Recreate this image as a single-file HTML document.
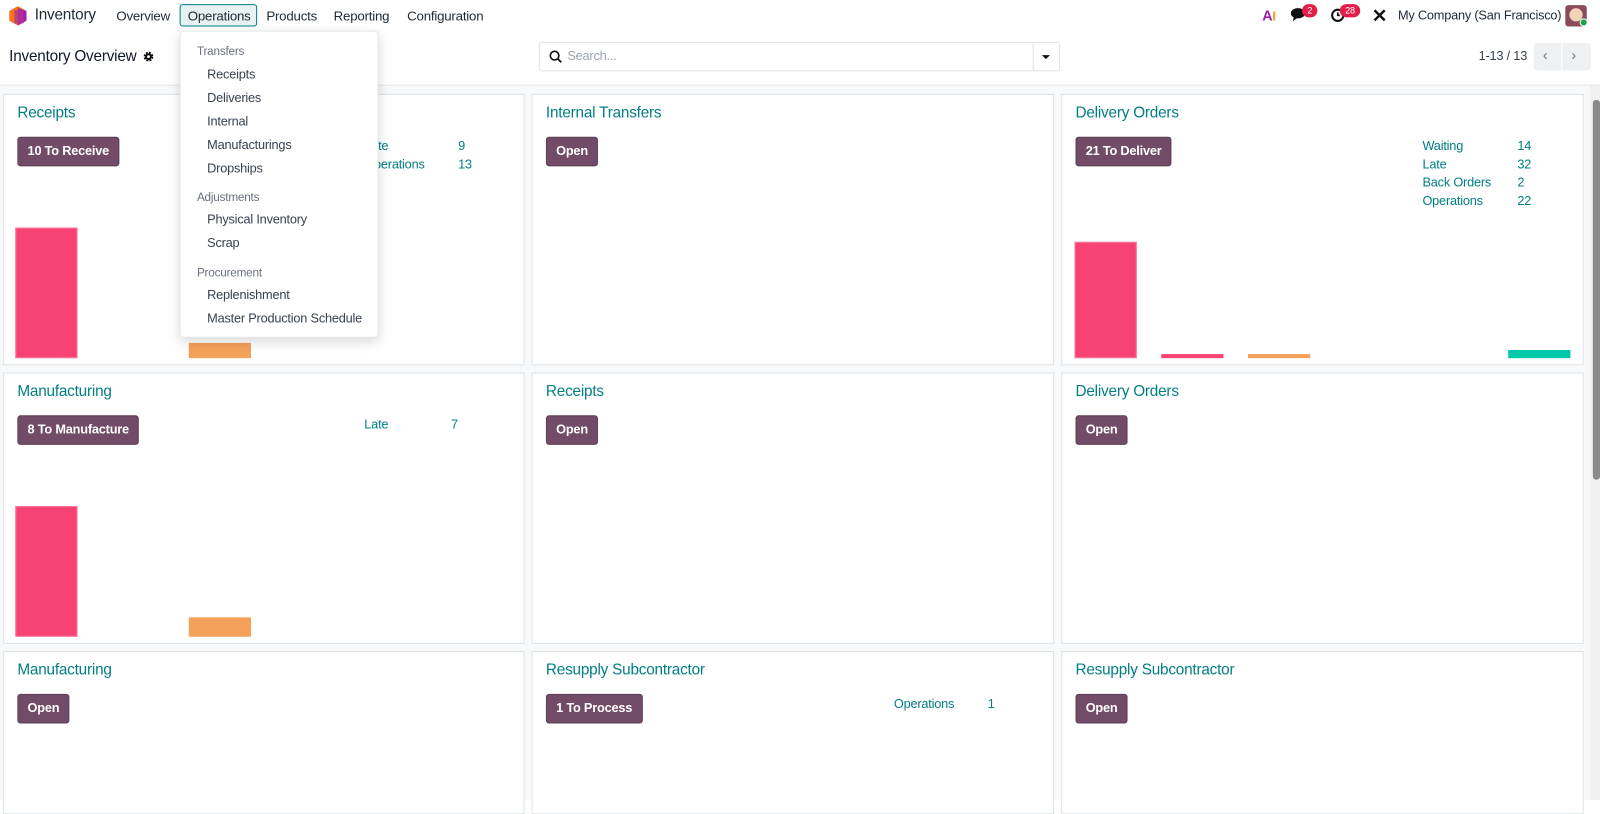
<!DOCTYPE html>
<html><head><meta charset="utf-8">
<style>
*{box-sizing:border-box;margin:0;padding:0}
html,body{width:1600px;height:784px;overflow:hidden;background:#fff}
#w{position:absolute;left:0;top:0;width:1568px;height:768px;transform:scale(1.020408);transform-origin:0 0;font-family:"Liberation Sans",sans-serif;font-size:13px;color:#374151;letter-spacing:-0.2px}
.a{position:absolute}
.nav{top:0;left:0;width:1568px;height:31px;background:#fff}
.nav span{position:absolute;top:8px;font-size:13px;color:#1f2937}
.cp{top:31px;left:0;width:1568px;height:53px;border-bottom:1px solid #dee2e6}
.main{top:84px;left:0;width:1558px;height:700px;background:#f8f9fa}
.card{position:absolute;background:#fff;border:1px solid #dee2e6}
.title{position:absolute;left:13px;top:9px;font-size:15px;color:#017e84}
.btn{position:absolute;left:13px;top:41px;height:29px;padding:0 9px;background:#714b67;border:1px solid #5e3e56;border-radius:3px;color:#fff;font-size:12.5px;font-weight:bold;line-height:27px}
.st{position:absolute;font-size:12.5px;color:#017e84}
.bar{position:absolute}
.dd{top:30px;left:176px;width:195px;height:301px;background:#fff;border:1px solid #e5e7eb;border-radius:4px;box-shadow:0 4px 12px rgba(0,0,0,.15)}
.dd .h{position:absolute;left:16px;font-size:11.5px;color:#6b7280}
.dd .i{position:absolute;left:26px;font-size:12.5px;color:#374151}
</style></head><body><div id="w">
<div class="a nav">
 <svg class="a" style="left:9px;top:6px" width="17" height="19" viewBox="0 0 17 19"><polygon points="8.5,0 17,4.75 17,14.25 8.5,19 0,14.25 0,4.75" fill="#f97316"/><polygon points="8.5,2 17,4.75 17,14.25 8.5,19" fill="#a21caf"/><polygon points="5,4 14,4 14,17 5,17" fill="#b0368f" opacity=".8"/></svg>
 <span style="left:34px;top:6px;font-size:15px">Inventory</span>
 <span style="left:114px">Overview</span>
 <div class="a" style="left:176px;top:4px;width:76px;height:22px;border:1px solid #017e84;background:#e6f2f3;border-radius:3px"></div>
 <span style="left:184px">Operations</span>
 <span style="left:261px">Products</span>
 <span style="left:327px">Reporting</span>
 <span style="left:399px">Configuration</span>
 <span style="left:1237px;top:7px;font-weight:bold;font-size:14px;color:#a21caf">A<span style="position:static;color:#f59e0b">I</span></span>
 <svg class="a" style="left:1265px;top:7px" width="16" height="15" viewBox="0 0 16 15"><ellipse cx="7" cy="6" rx="7" ry="5" fill="#111"/><polygon points="3,9 2,14 7,10" fill="#111"/></svg>
 <div class="a" style="left:1276px;top:4px;width:15px;height:13px;background:#e11d48;border-radius:7px;color:#fff;font-size:9px;text-align:center;line-height:13px">2</div>
 <svg class="a" style="left:1304px;top:8px" width="14" height="14" viewBox="0 0 14 14"><circle cx="7" cy="7" r="5.5" fill="none" stroke="#111" stroke-width="2"/><path d="M7 4v3h2" stroke="#111" stroke-width="1.6" fill="none"/></svg>
 <div class="a" style="left:1313px;top:4px;width:20px;height:13px;background:#e11d48;border-radius:7px;color:#fff;font-size:9px;text-align:center;line-height:13px">28</div>
 <svg class="a" style="left:1345px;top:8px" width="14" height="14" viewBox="0 0 14 14"><path d="M2 2l10 10M12 2L2 12" stroke="#111" stroke-width="2.4"/></svg>
 <span style="left:1370px;font-size:12.5px">My Company (San Francisco)</span>
 <div class="a" style="left:1534px;top:5px;width:21px;height:21px;background:#8b4a5a;border-radius:3px"></div>
 <div class="a" style="left:1538px;top:8px;width:13px;height:13px;background:#f3d3b8;border-radius:50%"></div>
 <div class="a" style="left:1548px;top:18px;width:8px;height:8px;background:#16a34a;border-radius:50%;border:1px solid #fff"></div>
</div>
<div class="a cp">
 <span class="a" style="left:9px;top:16px;font-size:15px;color:#111827">Inventory Overview</span>
 <svg class="a" style="left:140px;top:19px" width="11" height="11" viewBox="0 0 12 12"><circle cx="6" cy="6" r="4" fill="none" stroke="#111" stroke-width="2.4" stroke-dasharray="2 1.2"/><circle cx="6" cy="6" r="3.6" fill="#111"/><circle cx="6" cy="6" r="1.5" fill="#fff"/></svg>
 <div class="a" style="left:528px;top:10px;width:511px;height:29px;border:1px solid #dee2e6;border-radius:3px"></div>
 <svg class="a" style="left:538px;top:18px" width="13" height="13" viewBox="0 0 13 13"><circle cx="5.5" cy="5.5" r="4.2" fill="none" stroke="#111" stroke-width="1.6"/><path d="M8.5 8.5l3.5 3.5" stroke="#111" stroke-width="1.8"/></svg>
 <span class="a" style="left:556px;top:17px;color:#9ca3af;font-size:12.5px">Search...</span>
 <div class="a" style="left:1012px;top:11px;width:1px;height:27px;background:#dee2e6"></div>
 <div class="a" style="left:1021px;top:23px;border-left:4px solid transparent;border-right:4px solid transparent;border-top:4px solid #111"></div>
 <span class="a" style="left:1449px;top:17px;font-size:12.5px">1-13 / 13</span>
 <div class="a" style="left:1503px;top:11px;width:56px;height:27px;background:#eef0f2;border-radius:3px"></div>
 <div class="a" style="left:1530px;top:11px;width:1px;height:27px;background:#fff"></div>
 <span class="a" style="left:1512px;top:15px;color:#6b7280;font-size:14px">&#8249;</span>
 <span class="a" style="left:1540px;top:15px;color:#6b7280;font-size:14px">&#8250;</span>
</div>
<div class="a main"></div>
<div class="a" style="left:1558px;top:84px;width:10px;height:700px;background:#f1f1f1"></div>
<div class="a" style="left:1561px;top:98px;width:7px;height:372px;background:#8a8a8a;border-radius:3px"></div>

<div class="card" style="left:3px;top:92px;width:511px;height:266px">
 <div class="title">Receipts</div><div class="btn">10 To Receive</div>
 <div class="st" style="left:353px;top:43px">Late</div><div class="st" style="left:445px;top:43px">9</div>
 <div class="st" style="left:353px;top:61px">Operations</div><div class="st" style="left:445px;top:61px">13</div>
 <div class="bar" style="left:11px;top:130px;width:61px;height:128px;background:#f74373;border:1px solid #fb7a9b"></div>
 <div class="bar" style="left:181px;top:243px;width:61px;height:15px;background:#f4a15a"></div>
</div>
<div class="card" style="left:521px;top:92px;width:512px;height:266px"><div class="title">Internal Transfers</div><div class="btn">Open</div></div>
<div class="card" style="left:1040px;top:92px;width:512px;height:266px">
 <div class="title">Delivery Orders</div><div class="btn">21 To Deliver</div>
 <div class="st" style="left:353px;top:43px">Waiting</div><div class="st" style="left:446px;top:43px">14</div>
 <div class="st" style="left:353px;top:61px">Late</div><div class="st" style="left:446px;top:61px">32</div>
 <div class="st" style="left:353px;top:79px">Back Orders</div><div class="st" style="left:446px;top:79px">2</div>
 <div class="st" style="left:353px;top:97px">Operations</div><div class="st" style="left:446px;top:97px">22</div>
 <div class="bar" style="left:12px;top:144px;width:61px;height:114px;background:#f74373;border:1px solid #fb7a9b"></div>
 <div class="bar" style="left:97px;top:254px;width:61px;height:4px;background:#f74373"></div>
 <div class="bar" style="left:182px;top:254px;width:61px;height:4px;background:#f4a15a"></div>
 <div class="bar" style="left:437px;top:250px;width:61px;height:8px;background:#00c9aa"></div>
</div>
<div class="card" style="left:3px;top:365px;width:511px;height:266px">
 <div class="title">Manufacturing</div><div class="btn">8 To Manufacture</div>
 <div class="st" style="left:353px;top:43px">Late</div><div class="st" style="left:438px;top:43px">7</div>
 <div class="bar" style="left:11px;top:130px;width:61px;height:128px;background:#f74373;border:1px solid #fb7a9b"></div>
 <div class="bar" style="left:181px;top:239px;width:61px;height:19px;background:#f4a15a"></div>
</div>
<div class="card" style="left:521px;top:365px;width:512px;height:266px"><div class="title">Receipts</div><div class="btn">Open</div></div>
<div class="card" style="left:1040px;top:365px;width:512px;height:266px"><div class="title">Delivery Orders</div><div class="btn">Open</div></div>
<div class="card" style="left:3px;top:638px;width:511px;height:160px"><div class="title">Manufacturing</div><div class="btn">Open</div></div>
<div class="card" style="left:521px;top:638px;width:512px;height:160px">
 <div class="title">Resupply Subcontractor</div><div class="btn">1 To Process</div>
 <div class="st" style="left:354px;top:44px">Operations</div><div class="st" style="left:446px;top:44px">1</div>
</div>
<div class="card" style="left:1040px;top:638px;width:512px;height:160px"><div class="title">Resupply Subcontractor</div><div class="btn">Open</div></div>

<div class="a dd">
 <div class="h" style="top:14px">Transfers</div>
 <div class="i" style="top:35px">Receipts</div>
 <div class="i" style="top:58px">Deliveries</div>
 <div class="i" style="top:81px">Internal</div>
 <div class="i" style="top:104px">Manufacturings</div>
 <div class="i" style="top:127px">Dropships</div>
 <div class="h" style="top:157px">Adjustments</div>
 <div class="i" style="top:177px">Physical Inventory</div>
 <div class="i" style="top:200px">Scrap</div>
 <div class="h" style="top:231px">Procurement</div>
 <div class="i" style="top:251px">Replenishment</div>
 <div class="i" style="top:274px">Master Production Schedule</div>
</div>
</div></body></html>
